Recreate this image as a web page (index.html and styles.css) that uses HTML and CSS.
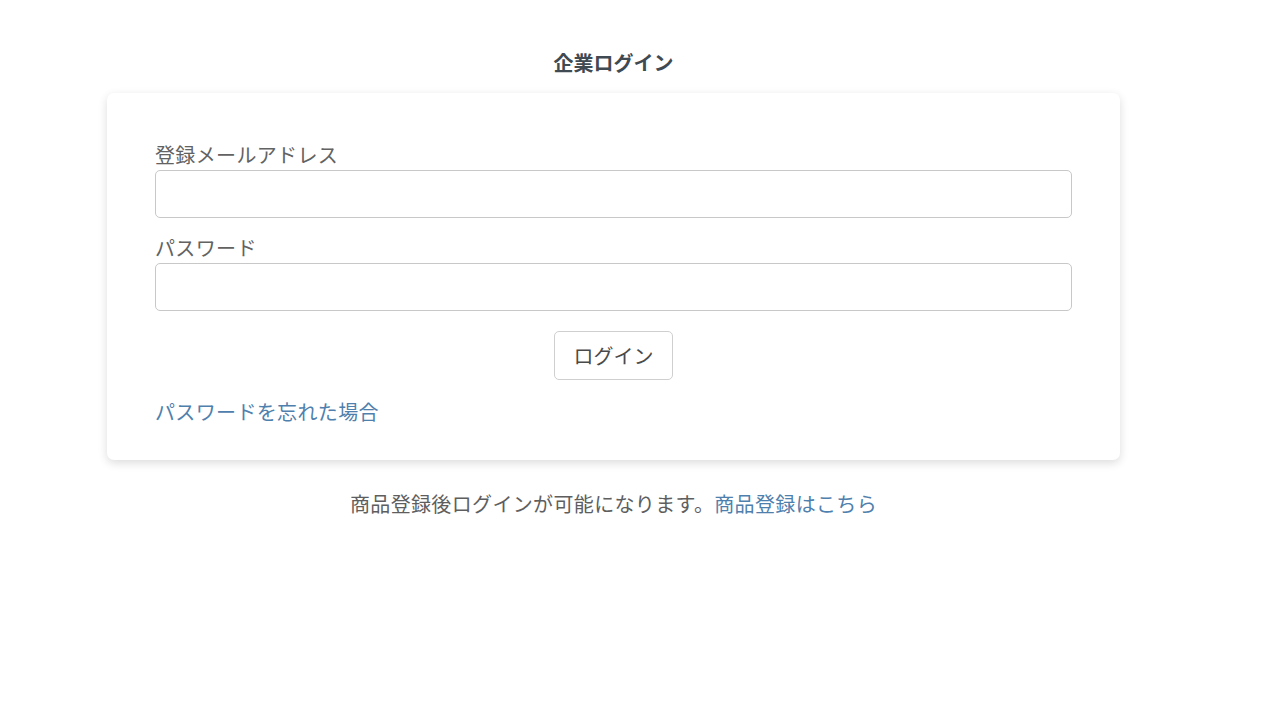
FILE: index.html
```html
<!DOCTYPE html>
<html lang="ja">
<head>
  <meta charset="UTF-8">
  <meta name="viewport" content="width=device-width, initial-scale=1.0">
  <title>企業ログイン</title>
  <link rel="stylesheet" href="styles.css">
</head>
<body>
  <div id="login-wrap">
    <h2 class="login-title">企業ログイン</h2>

    <!-- Login Card -->
    <div id="login-card">
      <form class="login-form">
        <label class="form-label" for="email">登録メールアドレス</label>
        <input class="form-input" type="email" id="email">

        <label class="form-label" for="password">パスワード</label>
        <input class="form-input" type="password" id="password">

        <div class="btn-row">
          <button type="button" id="login-btn">ログイン</button>
        </div>

        <a class="forgot-link" href="#">パスワードを忘れた場合</a>
      </form>
    </div>

    <p class="register-note">商品登録後ログインが可能になります。<a href="#">商品登録はこちら</a></p>
  </div>
</body>
</html>
```

FILE: styles.css
```css
body {
  font-family: "Noto Sans CJK JP", "Noto Sans", sans-serif;
  margin: 0;
  padding: 0;
  background: #fff;
  color: #5e5e5e;
  font-size: 20px;
  line-height: 30px;
  letter-spacing: 0.35px;
}

#login-wrap {
  width: 1013px;
  margin: 0 0 0 107px;
  padding-top: 48px;
}

.login-title {
  margin: 0 0 15px;
  text-align: center;
  font-size: 20px;
  line-height: 30px;
  font-weight: bold;
  letter-spacing: 0;
  color: #3f4a52;
}

/* Card */
#login-card {
  background: #fff;
  border-radius: 7px;
  box-shadow: 0 3px 10px rgba(0, 0, 0, 0.14);
  padding: 47px 48px 33px;
}

.login-form {
  display: flex;
  flex-direction: column;
  margin: 0;
}

.form-label {
  display: block;
  color: #626262;
}

.form-input {
  box-sizing: border-box;
  width: 100%;
  height: 48px;
  border: 1px solid #c8c8c8;
  border-radius: 5px;
  padding: 0 12px;
  font: inherit;
  margin-bottom: 15px;
}

.btn-row {
  display: flex;
  justify-content: center;
  margin-top: 5px;
}

#login-btn {
  box-sizing: border-box;
  width: 119px;
  height: 49px;
  background: #fff;
  border: 1px solid #cfcfcf;
  border-radius: 5px;
  font: inherit;
  letter-spacing: 0;
  color: #4a4a4a;
  cursor: pointer;
}

.forgot-link {
  align-self: flex-start;
  margin-top: 17px;
  color: #4f80ad;
  text-decoration: none;
}

/* Note under card */
.register-note {
  margin: 29px 0 0;
  text-align: center;
}

.register-note a {
  color: #4f80ad;
  text-decoration: none;
}
```
